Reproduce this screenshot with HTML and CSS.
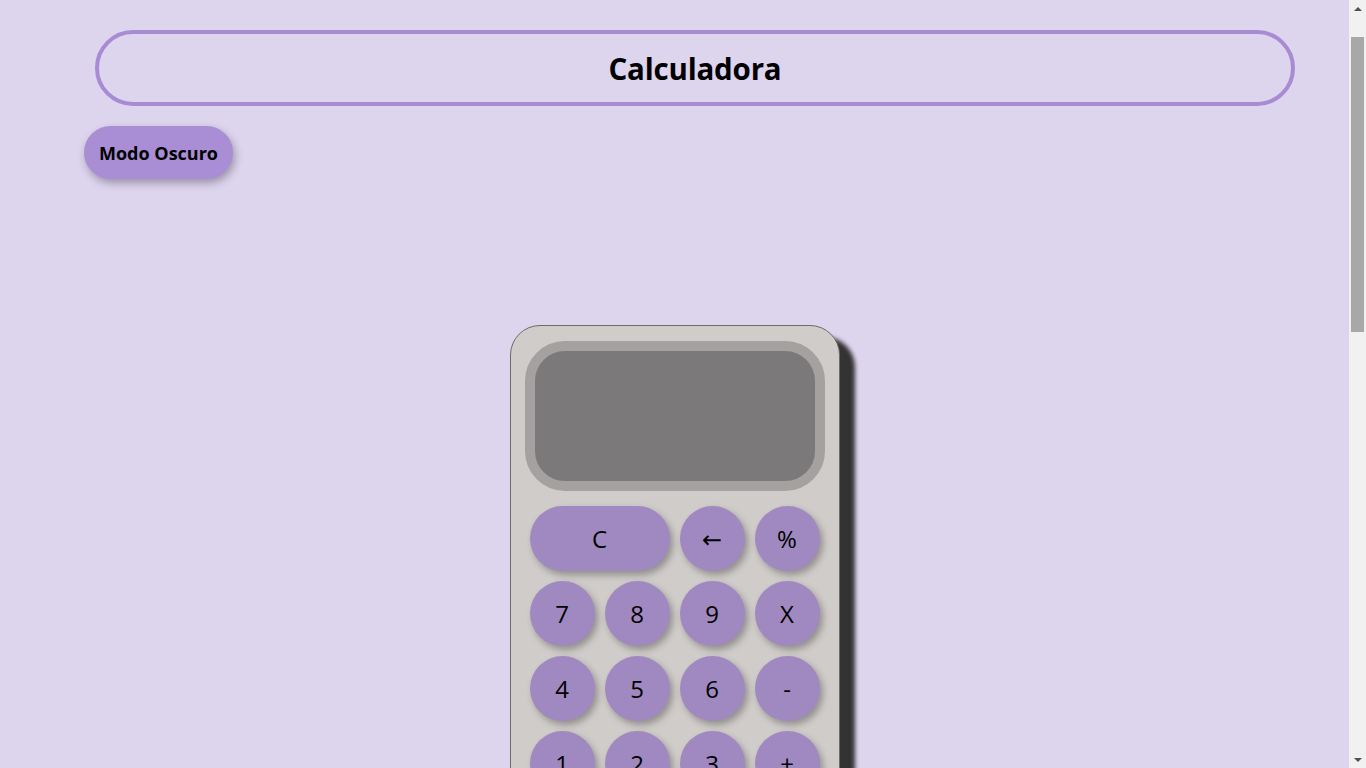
FILE: index.html
```html
<!DOCTYPE html>
<html lang="es">
<head>
<meta charset="utf-8">
<title>Calculadora</title>
<link rel="stylesheet" href="styles.css">
</head>
<body>
<header class="title-box">
  <h1 class="title">Calculadora</h1>
</header>
<button class="mode-btn">Modo Oscuro</button>
<main class="calc-wrap">
  <div class="calc">
    <div class="display"></div>
    <div class="keys">
      <button class="key wide">C</button>
      <button class="key">&larr;</button>
      <button class="key">%</button>
      <button class="key">7</button>
      <button class="key">8</button>
      <button class="key">9</button>
      <button class="key">X</button>
      <button class="key">4</button>
      <button class="key">5</button>
      <button class="key">6</button>
      <button class="key">-</button>
      <button class="key">1</button>
      <button class="key">2</button>
      <button class="key">3</button>
      <button class="key">+</button>
      <button class="key wide">0</button>
      <button class="key">.</button>
      <button class="key">=</button>
    </div>
  </div>
</main>
<div class="scrollbar" aria-hidden="true">
  <div class="sb-btn"><span class="tri-up"></span></div>
  <div class="sb-gap"></div>
  <div class="sb-thumb"></div>
  <div class="sb-rest"></div>
  <div class="sb-btn"><span class="tri-down"></span></div>
</div>
</body>
</html>
```
FILE: styles.css
```css
html, body {
  margin: 0;
  padding: 0;
}
body {
  background: #ddd4ee;
  font-family: "Trebuchet MS", "Open Sans", "DejaVu Sans", sans-serif;
  color: #000;
  padding-right: 17px;
  padding-bottom: 1000px;
}
.title-box {
  margin: 30px 54px 0 95px;
  height: 76px;
  box-sizing: border-box;
  border: 4px solid #a98bd3;
  border-radius: 38px;
  display: flex;
  align-items: center;
  justify-content: center;
}
.title {
  margin: 0;
  font-size: 29.5px;
  font-weight: bold;
  letter-spacing: -0.2px;
}
.mode-btn {
  display: block;
  margin: 20px 0 0 84px;
  width: 149px;
  height: 53px;
  border: none;
  border-radius: 27px;
  background: #a98ed5;
  font-family: inherit;
  font-size: 18px;
  font-weight: bold;
  color: #000;
  box-shadow: 2px 4px 8px rgba(0, 0, 0, 0.3);
  padding: 0;
}
.calc-wrap {
  display: flex;
  justify-content: center;
  padding-top: 146px;
}
.calc {
  width: 330px;
  box-sizing: border-box;
  background: #d0ccca;
  border: 1px solid #6e6a6a;
  border-radius: 30px;
  padding: 15px 14px 20px;
  box-shadow: 15px 12px 4px #333;
}
.display {
  height: 150px;
  box-sizing: border-box;
  border: 10px solid #a5a1a0;
  border-radius: 40px;
  background: #7b7979;
}
.keys {
  margin-top: 15px;
  padding: 0 5px;
  display: grid;
  grid-template-columns: repeat(4, 65px);
  grid-auto-rows: 65px;
  gap: 10px;
}
.key {
  border: none;
  border-radius: 33px;
  background: #a089c0;
  font-family: inherit;
  font-size: 24px;
  color: #000;
  padding: 0;
  box-shadow: 3px 4px 7px rgba(0, 0, 0, 0.3);
}
.key.wide {
  grid-column: span 2;
}
.scrollbar {
  position: fixed;
  top: 0;
  right: 0;
  width: 17px;
  height: 100vh;
  background: #f1f1f1;
  display: flex;
  flex-direction: column;
  align-items: center;
}
.sb-btn {
  height: 17px;
  width: 17px;
  display: flex;
  align-items: center;
  justify-content: center;
}
.tri-up {
  width: 0;
  height: 0;
  border-left: 4px solid transparent;
  border-right: 4px solid transparent;
  border-bottom: 4px solid #505050;
}
.tri-down {
  width: 0;
  height: 0;
  border-left: 4px solid transparent;
  border-right: 4px solid transparent;
  border-top: 4px solid #505050;
}
.sb-gap {
  height: 20px;
}
.sb-thumb {
  width: 13px;
  height: 295px;
  background: #a8a8a8;
}
.sb-rest {
  flex: 1;
}
```
